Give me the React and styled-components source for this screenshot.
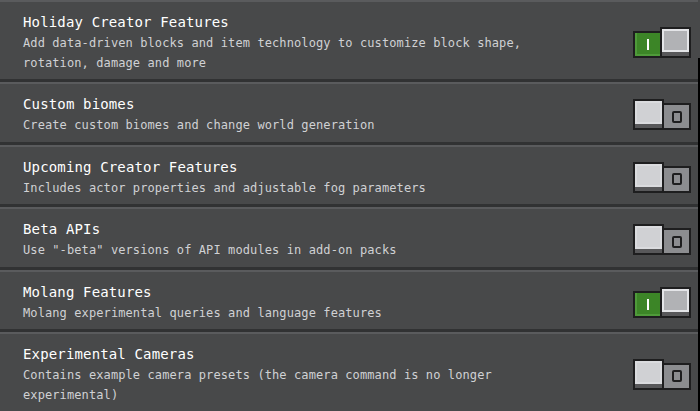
import React from 'react';
import styled, { createGlobalStyle } from 'styled-components';

const GlobalStyle = createGlobalStyle`
  html, body {
    margin: 0;
    padding: 0;
    background: #48494a;
    overflow: hidden;
  }
  body {
    font-family: "DejaVu Sans Mono", "Liberation Mono", monospace;
  }
`;

const Page = styled.div`
  position: relative;
  width: 700px;
  height: 411px;
  overflow: hidden;
`;

const List = styled.div`
  display: flex;
  flex-direction: column;
  width: 698px;
`;

const Row = styled.div`
  display: flex;
  align-items: center;
  justify-content: space-between;
  padding: 10px 7px 6.4px 23px;
  background: #48494a;
  border-top: 2px solid #5a5b5d;
  border-bottom: 3px solid #313233;
`;

const Text = styled.div`
  display: flex;
  flex-direction: column;
  max-width: 520px;
`;

const Title = styled.div`
  color: #ffffff;
  font-size: 14px;
  line-height: 21px;
  letter-spacing: 0.15px;
`;

const Desc = styled.div`
  color: #d0d1d4;
  font-size: 12px;
  line-height: 20px;
  letter-spacing: 0.1px;
`;

const Switch = styled.div`
  display: flex;
  align-items: flex-end;
  flex-shrink: 0;
`;

const Side = styled.div`
  box-sizing: border-box;
  width: 29px;
  height: 27px;
  border: 2px solid #1e1e1f;
  display: flex;
  align-items: center;
  justify-content: center;
  background: ${p => (p.on ? '#3c8527' : '#8c8d90')};
  box-shadow: ${p => (p.on ? 'inset 2px -2px 0 #4f9a3a' : 'none')};
`;

const OnMark = styled.span`
  width: 2px;
  height: 11px;
  background: #ffffff;
`;

const OffMark = styled.span`
  box-sizing: border-box;
  width: 10px;
  height: 12px;
  border: 2px solid #1e1e1f;
  border-radius: 2px;
`;

const Knob = styled.div`
  box-sizing: border-box;
  width: 31px;
  height: 31px;
  border: 2px solid #1e1e1f;
  background: #58585a;
  padding-bottom: 4px;
  display: flex;
  margin: ${p => (p.on ? '0 0 0 -2px' : '0 -2px 0 0')};
  position: relative;
  z-index: 1;
`;

const Face = styled.div`
  flex: 1;
  box-sizing: border-box;
  border: 2px solid ${p => (p.on ? '#e4e5e8' : '#dadbde')};
  background: ${p => (p.on ? '#b1b2b5' : '#d0d1d4')};
`;

const ScrollEdge = styled.div`
  position: absolute;
  right: 0;
  top: 58px;
  bottom: 0;
  width: 2px;
  background: #000000;
`;

const features = [
  {
    title: 'Holiday Creator Features',
    desc: 'Add data-driven blocks and item technology to customize block shape, rotation, damage and more',
    on: true,
  },
  {
    title: 'Custom biomes',
    desc: 'Create custom biomes and change world generation',
    on: false,
  },
  {
    title: 'Upcoming Creator Features',
    desc: 'Includes actor properties and adjustable fog parameters',
    on: false,
  },
  {
    title: 'Beta APIs',
    desc: 'Use "-beta" versions of API modules in add-on packs',
    on: false,
  },
  {
    title: 'Molang Features',
    desc: 'Molang experimental queries and language features',
    on: true,
  },
  {
    title: 'Experimental Cameras',
    desc: 'Contains example camera presets (the camera command is no longer experimental)',
    on: false,
  },
];

function Toggle({ on }) {
  if (on) {
    return (
      <Switch>
        <Side on>
          <OnMark />
        </Side>
        <Knob on>
          <Face on />
        </Knob>
      </Switch>
    );
  }
  return (
    <Switch>
      <Knob>
        <Face />
      </Knob>
      <Side>
        <OffMark />
      </Side>
    </Switch>
  );
}

export default function App() {
  return (
    <Page>
      <GlobalStyle />
      <List>
        {features.map(f => (
          <Row key={f.title}>
            <Text>
              <Title>{f.title}</Title>
              <Desc>{f.desc}</Desc>
            </Text>
            <Toggle on={f.on} />
          </Row>
        ))}
      </List>
      <ScrollEdge />
    </Page>
  );
}
